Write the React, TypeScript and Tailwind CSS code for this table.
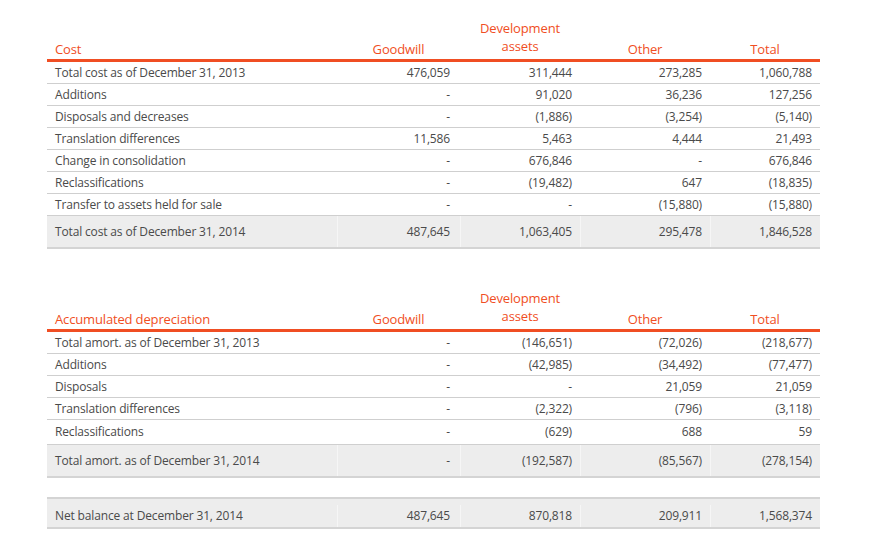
const cols = "grid grid-cols-[290px_123px_120px_130px_110px]";

type Row = { label: string; values: string[] };

const costRows: Row[] = [
  { label: "Total cost as of December 31, 2013", values: ["476,059", "311,444", "273,285", "1,060,788"] },
  { label: "Additions", values: ["-", "91,020", "36,236", "127,256"] },
  { label: "Disposals and decreases", values: ["-", "(1,886)", "(3,254)", "(5,140)"] },
  { label: "Translation differences", values: ["11,586", "5,463", "4,444", "21,493"] },
  { label: "Change in consolidation", values: ["-", "676,846", "-", "676,846"] },
  { label: "Reclassifications", values: ["-", "(19,482)", "647", "(18,835)"] },
  { label: "Transfer to assets held for sale", values: ["-", "-", "(15,880)", "(15,880)"] },
];

const deprRows: Row[] = [
  { label: "Total amort. as of December 31, 2013", values: ["-", "(146,651)", "(72,026)", "(218,677)"] },
  { label: "Additions", values: ["-", "(42,985)", "(34,492)", "(77,477)"] },
  { label: "Disposals", values: ["-", "-", "21,059", "21,059"] },
  { label: "Translation differences", values: ["-", "(2,322)", "(796)", "(3,118)"] },
  { label: "Reclassifications", values: ["-", "(629)", "688", "59"] },
];

function Header({ title }: { title: string }) {
  return (
    <div className={`${cols} h-[43px] items-end border-b-[3px] border-[#f04e23] pb-[2px] text-[13px] leading-[16px] text-[#f04e23]`}>
      <div className="pl-2">{title}</div>
      <div className="text-center">Goodwill</div>
      <div className="mb-[2px] text-center leading-[18px]">
        <div>Development</div>
        <div>assets</div>
      </div>
      <div className="text-center">Other</div>
      <div className="text-center">Total</div>
    </div>
  );
}

function DataRow({ row, tall }: { row: Row; tall?: boolean }) {
  return (
    <div className={`${cols} ${tall ? "h-[25px]" : "h-[22px]"} items-center border-b border-[#cfcfcf]`}>
      <div className="pl-2">{row.label}</div>
      {row.values.map((v, i) => (
        <div key={i} className={`text-right ${i === 0 ? "pr-[10px]" : "pr-2"}`}>
          {v}
        </div>
      ))}
    </div>
  );
}

function TotalRow({ row, net }: { row: Row; net?: boolean }) {
  return (
    <div className={`${cols} ${net ? "h-[30px] pt-[6px]" : "h-[33px]"} items-stretch border-b-2 border-[#d4d4d4] bg-[#ededed]`}>
      <div className="flex items-center pl-2">{row.label}</div>
      {row.values.map((v, i) => (
        <div
          key={i}
          className={`flex items-center justify-end border-l border-[#f6f6f6] ${i === 0 ? "pr-[10px]" : "pr-2"}`}
        >
          {v}
        </div>
      ))}
    </div>
  );
}

export default function App() {
  return (
    <div className="h-[541px] w-[870px] bg-white pl-[47px] pt-[19px] font-['Open_Sans',sans-serif] text-[12px] tracking-[-0.15px] text-[#4a4a4a]">
      <div className="w-[773px]">
        <Header title="Cost" />
        {costRows.map((r) => (
          <DataRow key={r.label} row={r} />
        ))}
        <TotalRow row={{ label: "Total cost as of December 31, 2014", values: ["487,645", "1,063,405", "295,478", "1,846,528"] }} />

        <div className="h-[40px]" />

        <Header title="Accumulated depreciation" />
        {deprRows.map((r, i) => (
          <DataRow key={r.label} row={r} tall={i === deprRows.length - 1} />
        ))}
        <TotalRow row={{ label: "Total amort. as of December 31, 2014", values: ["-", "(192,587)", "(85,567)", "(278,154)"] }} />

        <div className="h-[21px] border-b-2 border-[#d4d4d4]" />
        <TotalRow net row={{ label: "Net balance at December 31, 2014", values: ["487,645", "870,818", "209,911", "1,568,374"] }} />
      </div>
    </div>
  );
}
